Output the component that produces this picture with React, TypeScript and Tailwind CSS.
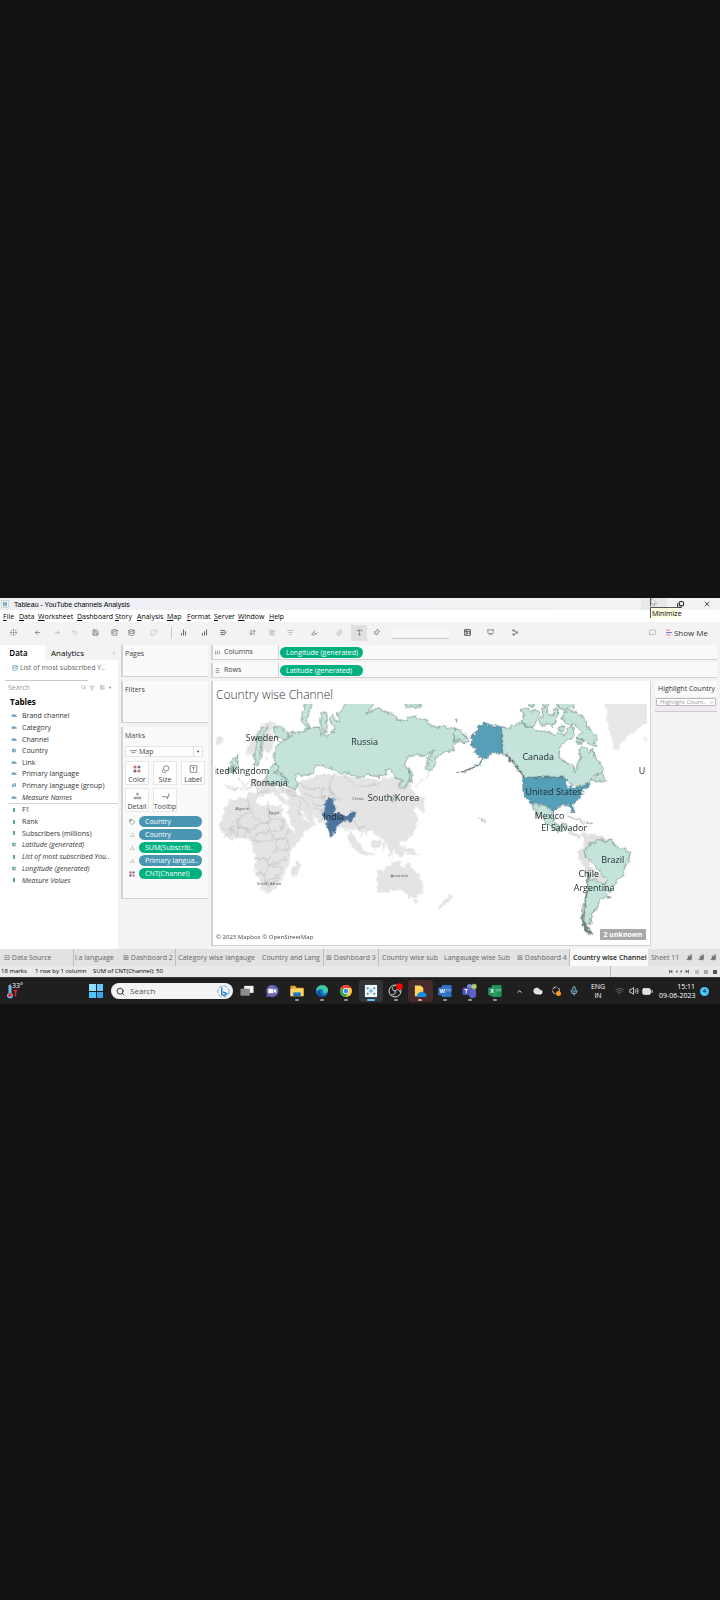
import React from 'react';
import {
  ChevronLeft, ArrowLeft, ArrowRight, Undo2, Save, DatabaseZap, RefreshCw, ArrowDownUp,
  ChartNoAxesColumn, ChartNoAxesColumnDecreasing, ListX, Highlighter, Paperclip, Tag, Pin,
  ChartBarBig, Presentation, Share2, Search, ListFilter, LayoutList, Wifi, Volume2, Mic,
  Cloud, ChevronUp, BatteryMedium, X, Copy, Database, MessageSquare, Type,
} from 'lucide-react';

const menus = [
  ['File', 'w-4'], ['Data', 'w-[19px]'], ['Worksheet', 'w-[39px]'], ['Dashboard', 'w-[38px]'], ['Story', 'w-[22px]'],
  ['Analysis', 'w-[30px]'], ['Map', 'w-5'], ['Format', 'w-[27px]'], ['Server', 'w-[24px]'], ['Window', 'w-[31px]'], ['Help', 'w-5'],
];

const dimensions = ['Brand channel', 'Category', 'Channel', 'Country', 'Link', 'Primary language', 'Primary language (group)', 'Measure Names'];
const measures = ['F1', 'Rank', 'Subscribers (millions)', 'Latitude (generated)', 'List of most subscribed You..', 'Longitude (generated)', 'Measure Values'];

function TitleBar() {
  return (
    <header className="flex h-3 items-center bg-gradient-to-r from-[#eef0f6] to-[#f3f3f3] text-black">
      <svg viewBox="0 0 16 16" className="ml-px h-2 w-2"><rect x="1" y="1" width="14" height="14" fill="#fff" stroke="#9bb" /><path d="M8 3v10M3 8h10M5 4v3M11 4v3M5 10v3M11 10v3" stroke="#2c7c97" strokeWidth="1.5" /></svg>
      <h1 className="ml-[5px] pt-px font-['Liberation_Sans'] text-[7px] leading-[11px]">Tableau - YouTube channels Analysis</h1>
      <button aria-label="Minimize" className="relative ml-auto h-3 w-[26px] bg-[#e8e8e8]">
        <span className="absolute top-[9px] left-[9px] z-10 h-[11px] w-[29px] border-t border-l border-[#555] bg-[#ffffe1] pl-px text-left text-[7px] leading-[11px]">Minimize</span>
        <svg viewBox="0 0 8 10" className="absolute top-0 left-[9px] h-[9px] w-2"><path d="M0 0v9" stroke="#333" /><path d="M1 0v7l2-1 1 3 1-1-1-2h3z" fill="#fff" stroke="#888" strokeWidth=".6" /></svg>
      </button>
      <button aria-label="Restore" className="flex h-3 w-[26px] items-center justify-center"><Copy className="h-[7px] w-[7px] -scale-x-100 rotate-180" strokeWidth={3} /></button>
      <button aria-label="Close" className="flex h-3 w-[27px] items-center justify-center"><X className="h-2 w-2" strokeWidth={2} /></button>
    </header>
  );
}

function Tool({ w, label, children }: { w: string; label: string; children: React.ReactNode }) {
  return <button aria-label={label} className={`flex h-4 shrink-0 items-center justify-center ${w}`}>{children}</button>;
}

const ic = 'h-[7px] w-[7px]';

function Toolbar() {
  return (
    <div className="flex h-[23px] items-center bg-[#f3f3f3] pb-[2px] text-[#555]">
      <Tool w="w-[26px]" label="Start page"><svg viewBox="0 0 12 12" className={ic}><path d="M6 0v3M6 9v3M0 6h3M9 6h3M6 4.500v3M4.500 6h3M2 2v2M10 2v2M2 8v2M10 8v2" stroke="#777" strokeWidth="1.5" /></svg></Tool>
      <Tool w="w-[22px]" label="Undo"><ArrowLeft className={ic} /></Tool>
      <Tool w="w-[18px]" label="Redo"><ArrowRight className={`${ic} text-[#aaa]`} /></Tool>
      <Tool w="w-4" label="Replay"><Undo2 className={`${ic} text-[#bbb]`} /></Tool>
      <Tool w="w-[26px]" label="Save"><Save className={ic} /></Tool>
      <Tool w="w-3" label="New data source"><DatabaseZap className={ic} /></Tool>
      <Tool w="w-[22px]" label="Pause updates"><Database className={ic} /></Tool>
      <Tool w="w-[22px]" label="Refresh"><RefreshCw className={`${ic} text-[#bbb]`} /></Tool>
      <span className="mr-px ml-[7px] h-3 w-px bg-[#c9c9c9]" />
      <Tool w="w-[20px]" label="New worksheet"><ChartNoAxesColumn className={ic} strokeWidth={3} /></Tool>
      <Tool w="w-[22px]" label="Duplicate"><ChartNoAxesColumnDecreasing className={`${ic} -scale-x-100`} strokeWidth={3} /></Tool>
      <Tool w="w-4" label="Clear sheet"><ListX className={ic} strokeWidth={3} /></Tool>
      <Tool w="w-[33px] pl-[10px]" label="Swap"><ArrowDownUp className={ic} /></Tool>
      <Tool w="w-4" label="Sort ascending"><ChartBarBig className={`${ic} text-[#aaa]`} /></Tool>
      <Tool w="w-5" label="Sort descending"><ListFilter className={`${ic} text-[#999]`} /></Tool>
      <Tool w="w-[28px]" label="Highlight"><Highlighter className={ic} /></Tool>
      <Tool w="w-[23px]" label="Group"><Paperclip className={`${ic} text-[#aaa]`} /></Tool>
      <button aria-label="Show labels" className="flex h-4 w-4 shrink-0 items-center justify-center bg-[#e0e0e0]"><Type className={ic} /></button>
      <Tool w="w-[18px]" label="Fix axes"><Pin className={`${ic} rotate-45`} /></Tool>
      <select aria-label="Fit" className="mr-2 ml-[7px] h-[13px] w-[57px] shrink-0 appearance-none border-b border-[#c6c6c6] bg-[#f6f6f6]" />
      <Tool w="w-5" label="Cards"><svg viewBox="0 0 12 12" className={ic}><path d="M1 1h10v10H1zM1 4h10M4 1v10M6 9V6M9 9V5" stroke="#555" fill="none" strokeWidth="1.500" /></svg></Tool>
      <Tool w="w-[26px]" label="Presentation"><Presentation className={ic} /></Tool>
      <Tool w="w-[24px]" label="Share"><Share2 className={`${ic} -scale-x-100`} /></Tool>
      <span className="flex-1" />
      <Tool w="w-[18px]" label="Guide"><MessageSquare className={`${ic} text-[#999]`} /></Tool>
      <button className="mr-3 ml-[4px] flex items-center gap-[2px] text-[8px] leading-4 text-[#333]">
        <svg viewBox="0 0 10 12" className="h-[7px] w-[6px]"><path d="M0 2h7M0 10h8" stroke="#d77" strokeWidth="1.500" /><path d="M0 6h10" stroke="#66c" strokeWidth="1.500" /></svg>
        Show Me
      </button>
    </div>
  );
}

function FieldIcon({ kind, color }: { kind: string; color: string }) {
  if (kind === 'abc') return <svg viewBox="0 0 12 6" className="h-[3px] w-[6px]"><path d="M1 4a1.500 1.500 0 1 0 0-1M5 0v5h2V2H5M11 2H9v3h2" fill="none" stroke={color} strokeWidth="1.500" /></svg>;
  if (kind === 'globe') return <svg viewBox="0 0 8 8" className="h-[5px] w-[6px]"><circle cx="4" cy="4" r="3.200" fill={color} /><path d="M4 1v6M4 4h3" stroke="#fff" /></svg>;
  if (kind === 'group') return <svg viewBox="0 0 8 8" className="h-[5px] w-[6px]"><path d="M2 7V2l4-1v5M1 5l5-1" stroke={color} fill="none" strokeWidth="1.300" /></svg>;
  return <svg viewBox="0 0 8 8" className="h-[4px] w-[6px]"><path d="M3 0v8M5 0v8" stroke={color} strokeWidth="1.800" /></svg>;
}

function DataPane() {
  const kinds = ['abc', 'abc', 'abc', 'globe', 'abc', 'abc', 'group', 'abc'];
  const mk = ['num', 'num', 'num', 'globe', 'num', 'globe', 'num'];
  return (
    <aside className="w-[118px] shrink-0 bg-white text-[#333]">
      <div className="flex h-[15px] text-[8px] leading-[14px] text-black">
        <button className="w-[45px] pr-2 text-center font-semibold">Data</button>
        <button className="flex flex-1 items-center justify-between bg-[#f3f3f3] pr-[1px] pl-[6px]">Analytics<ChevronLeft className="h-[6px] w-[6px] text-[#888]" /></button>
      </div>
      <button className="mt-[3px] ml-3 flex h-[10px] items-center gap-[2px] text-[7px] leading-[10px] whitespace-nowrap text-[#666]">
        <Database className="h-[6px] w-[6px] text-[#4787a0]" />List of most subscribed Y..
      </button>
      <div className="mt-[7px] ml-[5px] h-px w-[83px] bg-[#c8c8c8]" />
      <div className="flex h-[13px] items-center pr-[6px] pl-2 text-[#888]">
        <input aria-label="Search fields" placeholder="Search" className="h-3 min-w-0 flex-1 text-[7px] leading-3 outline-none placeholder:text-[#999]" />
        <Search className="h-[5px] w-[5px]" /><ListFilter className="ml-[3px] h-[6px] w-[6px]" /><LayoutList className="ml-[5px] h-[5px] w-[5px]" /><span className="ml-[3px] text-[4px]">▼</span>
      </div>
      <h2 className="mt-[2px] ml-[10px] h-3 text-[8px] leading-3 font-bold text-black">Tables</h2>
      <ul className="mt-[2px] grid h-[93px] auto-rows-fr text-[7px] leading-[11px]">
        {dimensions.map((d, i) => (
          <li key={d} className={`flex items-center gap-[5px] pl-[11px] whitespace-nowrap ${i === 7 ? 'italic' : ''}`}><FieldIcon kind={kinds[i]} color="#4787a0" />{d}</li>
        ))}
      </ul>
      <div className="ml-2 h-px bg-[#d4d4d4]" />
      <ul className="grid h-[82px] auto-rows-fr text-[7px] leading-[11px]">
        {measures.map((d, i) => (
          <li key={d} className={`flex items-center gap-[5px] pl-[11px] whitespace-nowrap ${i > 2 ? 'italic' : ''}`}><FieldIcon kind={mk[i]} color="#4a9a7c" />{d}</li>
        ))}
      </ul>
    </aside>
  );
}

const dots = <svg viewBox="0 0 12 12" className="h-2 w-2"><circle cx="3" cy="3" r="2.400" fill="#d96a72" /><circle cx="9" cy="3" r="2.400" fill="#5b7fb0" /><circle cx="3" cy="9" r="2.400" fill="#6c6a9c" /><circle cx="9" cy="9" r="2.400" fill="#e27b66" /></svg>;
const gs = 'h-2 w-[9px] fill-none stroke-[#555]';
const markButtons: [string, React.ReactNode][] = [
  ['Color', dots],
  ['Size', <svg viewBox="0 0 12 12" className={gs}><circle cx="7" cy="5" r="4" /><path d="M3 6a3 3 0 1 0 4 4" /></svg>],
  ['Label', <svg viewBox="0 0 12 12" className={gs}><path d="M1 1h10v10H1zM4 4h4M6 4v4" /></svg>],
  ['Detail', <svg viewBox="0 0 14 12" className={gs}><circle cx="3" cy="9" r="1.500" /><circle cx="7" cy="9" r="1.500" /><circle cx="11" cy="9" r="1.500" /><circle cx="7" cy="3" r="1.500" /></svg>],
  ['Tooltip', <svg viewBox="0 0 12 12" className={gs}><path d="M1 7h6l2 3V7h2V2" /></svg>],
];
const pills = [['Country', 'b'], ['Country', 'b'], ['SUM(Subscrib..', 'g'], ['Primary langua..', 'b'], ['CNT(Channel)', 'g']];
const card = 'border-b border-l-2 border-[#d2d2d2] bg-[#fafafa] pl-[2px] text-[7px] text-[#444]';

function Cards() {
  return (
    <div className="ml-[3px] flex w-[87px] shrink-0 flex-col gap-1">
      <section className={`${card} h-8 pt-1 leading-[10px]`}>Pages</section>
      <section className={`${card} h-[42px] pt-1 leading-[10px]`}>Filters</section>
      <section className={`${card} h-[172px] pt-1 leading-[10px]`}>
        <h2>Marks</h2>
        <button className="mt-[5px] flex h-[11px] w-[78px] items-center border border-[#e4e4e4] bg-white pl-1 text-[7px]">
          <svg viewBox="0 0 10 6" className="h-[4px] w-[7px]"><path d="M0 1h10M2 4h6" stroke="#888" strokeWidth="1.500" /></svg><span className="ml-[2px] flex-1 text-left">Map</span><span className="w-[9px] border-l border-[#ddd] text-[4px]">▼</span>
        </button>
        <div className="mt-[4px] grid w-[80px] grid-cols-3 gap-x-1 gap-y-[3px]">
          {markButtons.map(([n, g]) => (
            <button key={n} className="flex h-6 flex-col items-center justify-between border border-[#e6e6e6] bg-white pt-[3px] text-[7px] leading-[9px]">{g}<span>{n}</span></button>
          ))}
        </div>
        <ul className="mt-1 grid gap-[2px]">
          {pills.map(([t, c], i) => (
            <li key={i} className="flex h-[11px] items-center">
              <span className="flex w-[14px] justify-center">
                {i === 4 ? <span className="-m-px scale-75">{dots}</span> : i === 0 ? <Tag className="h-[6px] w-[6px]" /> : <svg viewBox="0 0 12 10" className="h-[4px] w-[5px] fill-none stroke-[#777]"><circle cx="2" cy="8" r="1.500" /><circle cx="9" cy="8" r="1.500" /><circle cx="6" cy="2" r="1.500" /></svg>}
              </span>
              <button className={`h-[11px] w-[63px] rounded-full pl-[6px] text-left text-[7px] leading-[11px] text-white ${c === 'b' ? 'bg-[#4996b2]' : 'bg-[#00b180]'}`}>{t}</button>
            </li>
          ))}
        </ul>
      </section>
    </div>
  );
}

function Shelf({ name, pill, rows }: { name: string; pill: string; rows?: boolean }) {
  return (
    <div className="flex h-[15px] items-center border-b border-l-2 border-[#d2d2d2] bg-[#fafafa]">
      <span className="flex h-full w-[66px] items-center gap-[4px] border-r border-[#d2d2d2] pl-[2px] text-[7px] leading-[14px] text-[#444]">
        <svg viewBox="0 0 8 8" className={`h-[5px] w-[5px] ${rows ? 'rotate-90' : ''}`}><path d="M1 1v6M4 1v6M7 1v6" stroke="#666" /></svg>{name}
      </span>
      <button className="ml-px h-[11px] w-[83px] rounded-full bg-[#00b180] pl-[6px] text-left text-[7px] leading-[11px] whitespace-nowrap text-white">{pill}</button>
    </div>
  );
}

const mint = { fill: '#c4e3da', stroke: '#56736e', strokeWidth: 2 };
const mapLabels: [string, number, number][] = [
  ['Sweden', 172, 304], ['Russia', 480, 315], ['ited Kingdom', 110, 402], ['Romania', 193, 439], ['South Korea', 567, 485],
  ['India', 387, 541], ['Canada', 1002, 359], ['United States', 1048, 467], ['Mexico', 1036, 539], ['El Salvador', 1080, 575],
  ['Brazil', 1226, 669], ['Chile', 1154, 713], ['Argentina', 1170, 754], ['U', 1314, 402],
];

function WorldMap() {
  return (
    <svg viewBox="30 192 1299 714" className="block w-full" role="img" aria-label="Country wise channel map">
      <defs>
        <filter id="coast" x="-5%" y="-5%" width="110%" height="110%">
          <feTurbulence type="fractalNoise" baseFrequency="0.07" numOctaves="2" seed="4" result="n" />
          <feDisplacementMap in="SourceGraphic" in2="n" scale="17" xChannelSelector="R" yChannelSelector="G" />
        </filter>
      </defs>
      <g filter="url(#coast)">
        <g fill="#e4e4e4" stroke="#f6f6f6" strokeWidth="1">
          <path d="M30 296l14-8 10 10-8 14-16 4z" />
          <path d="M120 340l8-22 14-16 8-24 16-18 22-14 22 0 4 14-14 10 6 30 8 14-20 18-10 6 8 26 20-6 20 10 20 80 30-22 80-25 160 20 60-15 30 20 20 40 30 10-4 18 8 22-14 4-12-20-14 6 10 20 4 22-14 36-22 18-20 6 18 34-10 14-14-10-12-20-4 30 16 34-10-10-16-50-14-30-50-30-70 0-10-6-34 0-16-14-20-2-4-16-18-6 6-16 20-6-20-4-40 6-24-4-14-8-6-14 14 2-14-20-14-6 20 34-10 6-24-36-20 0-30 16-20 24-20-4 4-34 36-4-14-24 22-6 20-20 22-14-4-26z" />
          <path d="M278 505l30-15 36 10 20 16-20 6-20-4 2 20 10 14-40 28-20 6-16-30-14-40 6-20z" />
          <path d="M600 460l14-8 10 10-20 30-16 12-8-4 20-16z" />
        </g>
        <g transform="translate(0 450)" fill="#e4e4e4">
          <path d="M76 28l30-4 28 0 0 10 18 4 12 6 34 4 30 0 6 12 6 20 12 26 12 20 34 0-8 20-26 28-10 16 2 28-14 16-2 22-12 20-14 20-20 12-18 0-8-14-6-30-14-26 6-34-8-18-6-26-10-12-20-4-30 6-26-20-12-20 10-34 8-22z" />
          <path d="M282 212l4 16-10 30-10 4-6-12 6-22z" />
          <path d="M516 250l20-10 14-14 14-6 4-6 22 0-2 12 14 10 8-26 10 22 14 16 12 14 10 20-2 26-16 16-28 0-14-20-10-6-26 4-20 10-20-2z" />
          <path d="M626 330l14 0-8 14zM732 310l14 8-4 8-16 16-18 16-8-6 16-16 16-12zM590 172l34 6 22 20-16 2-22-8z" />
          <path d="M434 118l18 30 28 36 30 8-4 6-40-4-20-18-18-34zM498 158l28-10 6 10-14 20-16-4zM538 120l10 24-8 0zM532 158l12 4-4 22zM546 40l8 18-8 8z" />
          <path d="M500 0l40 0-2 60-24 22-16 6-6-20z" />
          <path d="M450 70l30 0 14 50-6 10-20-16-18-24z" />
        </g>
        <g fill="#fff">
          <path d="M212 430l20-4 22 12-6 8-34 2zM270 424l12 6-2 20 10 14-8 6-10-20zM180 330l8 20-14 20-14 0 8-20zM206 306l8 10-6 20-8-2z" />
          <path d="M232 512l8 4 24 50-6 4-24-44zM286 516l10 2 20 22-4 6-20-14zM412 440l0 2z" />
        </g>
        <g fill="none" stroke="#b0aeac" strokeWidth="1.800">
          <path d="M128 478l8 36-34 20-20 20M136 514l30 34 26 0 0-66M192 537l42 0M102 534l-4 28 40 10 28-24M192 548l0 28-32 6-20 14M234 537l-4 36-32 6M80 560l40 2 20 20M100 570l0 26M56 566l30 4 10 26M70 578l-14 14M78 560l0 30M122 572l-4 24M198 579l16 20 30-4 6-28M140 600l30 6 40-6M214 599l0 30-30 30-34-4M244 595l6 34-36 4M184 659l10 20 30-14 20-10M150 702l30-2 22-30M180 700l0 30 20-10 30-20M202 680l30 4M172 730l20 10 30-26" />
          <path d="M78 450l60-6 10-20 20 10 40-4 30 20 36 10M60 440l40 6M100 410l20 30 20-20 30 8 20-16M240 460l46 10 26 26M150 442l10 20 20-8M180 450l20 16M278 430l34 20 40-6 34 14M300 460l30 16 50-12M320 490l30 10 30-20M352 444l4 40M390 400l-20 40 20 30 20 8M410 404l50 36 60-6 20-24M286 480l-6 40 40 20M330 500l30 20M450 545l10 20 20-6M460 560l14 30M470 572l20 18" />
        </g>
        <g {...mint}>
          <path d="M205 350L212 325 222 312 240 298 258 290 262 278 285 278 300 270 325 262 345 262 352 285 358 280 345 245 350 218 362 216 368 262 360 282 366 290 380 272 385 280 388 262 372 235 385 222 392 240 405 248 398 220 410 210 420 196 425 180 518 180 486 222 515 205 545 215 568 222 575 240 600 240 625 228 650 235 668 240 675 256 700 262 730 260 760 275 790 290 784 308 770 294 745 320 750 328 715 340 696 352 690 380 675 398 665 385 672 350 690 330 665 346 640 345 612 350 598 378 612 385 620 410 608 432 595 448 582 444 590 420 570 412 560 392 548 388 540 408 520 410 490 405 460 412 435 402 405 400 390 390 370 385 350 375 330 385 325 402 300 405 275 405 278 425 272 450 250 440 248 420 225 400 215 375z" />
          <path d="M304 180l20 0-8 30-10 28 10 24-4 2-22-18 2-32zM206 262l18-4 14 12 14 10 2 12-10 8-20-8-12 2-4-16zM160 280l10-16 18-4-10 20-6 30-4 40-8 26-12-4 2-40z" />
          <path d="M190 392l10-12 8-8 14 8 0 12-14 6 34 14-2 20-14 6-24-6-14 0-6-12zM612 384l10 24 0 26-6-6zM600 180l20 14 20-4 10 6-22 8-26-6zM752 240l8 0-4 8z" />
          <path d="M88 352l12-8-4 18 6 14-2 14-16 10-6-4 6-14-8-10zM72 386l8-4 0 10-8 4zM560 468l10-4 2 16-8 8z" />
        </g>
        <path d="M372 474l18 4-6 10 10 16-6 10 22 10 16 6 16-14 12 4-8 16-10 14-8-12-8 8-12 0-12 16-12 26-6 2-10-28-4-24-10-2-2-14 12-14-4-18z" fill="#4c749d" stroke="#56738d" strokeWidth="1.500" />
        <g transform="translate(750 0)">
          <path d="M446 180l140 0 0 62-20 14-26 20-20 14-20 20-8 26-10-10-12-26-6-30-6-38 2-20zM568 294l14-6 0 28z" fill="#e8e8e8" />
          <g {...mint}>
            <path d="M144 260L164 264 182 256 196 250 212 256 234 262 250 274 276 274 300 284 316 278 330 286 340 268 352 256 360 276 352 296 334 304 318 320 312 340 322 362 344 370 356 378 362 398 370 392 368 372 380 352 374 330 390 318 404 334 416 328 424 352 438 372 450 388 442 400 418 408 408 420 394 434 374 442 360 450 350 432 334 416 324 412 206 412 192 392 176 372 162 350 144 340Z" />
            <path d="M200 208L216 202 228 212 250 212 258 224 246 240 238 262 214 258 198 246 208 232ZM262 206L276 204 282 222 296 226 300 206 312 206 308 236 296 258 280 250 264 256 252 240 268 226ZM222 180L246 180 240 200 224 198ZM262 180L290 180 284 200 268 198ZM304 180L360 180 358 200 330 210 310 200Z" />
            <path d="M326 216L346 210 366 216 382 230 396 244 402 262 416 278 430 294 420 304 428 322 410 318 398 302 386 306 372 290 384 276 366 258 344 252 326 240ZM368 294L384 298 380 312 366 310ZM314 262L328 258 330 272 318 274Z" />
            <path d="M0 262L18 270 34 290 46 302 28 308 14 298 0 302ZM412 420L430 408 442 402 448 412 460 420 448 426 428 424Z" />
          </g>
          <g fill="#559fb8" stroke="#596d76" strokeWidth="2">
            <path d="M144 260l0 82-14-4-16 0-14 12-20 20-32 18-24 10 26-14 24-14 14-16-18-8-10-12 12-10-22-6-2-10 12-4-12-14 18-6 4-22 24-14 10 8z" />
            <path d="M206 412L330 412 344 430 350 444 366 446 384 440 406 428 412 434 396 446 384 460 376 474 366 486 356 496 362 520 354 518 346 500 326 496 306 502 298 516 280 500 264 492 236 490 214 476 206 448Z" />
          </g>
          <path d="M332 420l14 6 0 20-6-2-2-14zM352 434l10 6-4 8-6-4z" fill="#fff" />
          <path d="M158 346l12 16 14 12 12 20 12 16" fill="none" stroke="#566" strokeWidth="6" strokeDasharray="7 3" />
          <g {...mint}>
            <path d="M230 494l28 2 20 4 18 20 2 26 16 16 12-10 16 0-6 10-12 0-2 14-26-10-22-16-16-24z" />
          </g>
          <path d="M238 508l14 26M340 532l44 10 10 10M400 550l18 0M76 536l18 8" stroke="#999" fill="none" strokeWidth="3" />
          <path d="M330 560l14 20 30 18 12-18 50 8 14 10 20 0-6 20-54 12-6 50 40 30 12 40-10 14-20-30-24-12-10-44-16-20 0-24 16-20-2-20-40-22z" fill="#e2e2e2" stroke="#cbc8c8" strokeWidth="1.500" />
          <g {...mint}>
            <path d="M390 638L402 614 424 610 432 600 460 602 470 598 480 616 508 626 528 640 524 664 512 680 508 708 486 724 466 758 452 742 456 722 436 694 414 670 396 654Z" />
            <path d="M402 696L408 724 424 722 456 740 454 760 466 772 440 780 424 806 412 834 404 858 390 846 388 810 396 760Z" />
          </g>
          <path d="M402 690l0 40-8 70-4 30" fill="none" stroke="#667" strokeWidth="2.500" />
          <path d="M382 790l6 50 12 20 18 28-8 0-20-16-8-20z" fill="#6b817c" />
        </g>
        <path d="M635 440l30-28 14-20M690 330l-20 50" fill="none" stroke="#777" strokeWidth="1.500" strokeDasharray="5 5" />
      </g>
      <path d="M756 398l24-4 28-12" fill="none" stroke="#666" strokeWidth="2.500" strokeDasharray="8 4" />
      <g className="fill-[#555] text-[13px]" textAnchor="middle"><text x="112" y="510">Algeria</text><text x="208" y="522">Egypt</text><text x="460" y="480">China</text><text x="584" y="711">Australia</text><text x="193" y="736">South Africa</text></g>
      <g className="text-[27px]" textAnchor="middle" fill="#1f2a2c">{mapLabels.map(([t, x, y]) => <text key={t} x={x} y={y}>{t}</text>)}</g>
    </svg>
  );
}

function View() {
  return (
    <main className="flex h-[265px] min-w-0 flex-1 flex-col border-r border-b border-l-2 border-[#d2d2d2] bg-white">
      <h2 className="h-[23px] pt-[5px] pl-[3px] text-[12px] leading-[18px] font-light text-[#333]">Country wise Channel</h2>
      <div className="relative mr-[3px] ml-[2px] flex-1">
        <WorldMap />
        <p className="absolute bottom-[3px] left-px text-[6px] leading-[9px] text-[#444]">© 2023 Mapbox © OpenStreetMap</p>
        <button className="absolute right-px bottom-[5px] h-[11px] w-[46px] bg-[#a9a9a9] text-center text-[7px] leading-[11px] font-bold text-white">2 unknown</button>
      </div>
    </main>
  );
}

const tabs = [
  ['⊟ Data Source', 'w-[74px] border-r pl-1'], ["l a language", 'w-[45px] pl-[1px]'], ['⊞ Dashboard 2', 'w-[57px] border-r pl-1'],
  ['Category wise langauge', 'w-[81px] pl-[2px]'], ['Country and Lang', 'w-[67px] border-r pl-[5px]'], ['⊞ Dashboard 3', 'w-[55px] border-r pl-[2px]'],
  ['Country wise sub', 'w-[61px] pl-[3px]'], ['Langauage wise Sub', 'w-[74px] pl-1'], ['⊞ Dashboard 4', 'w-[56px] border-r pl-[3px]'],
  ['Country wise Channel', 'w-[78px] bg-[#fafafa] pl-[3px] font-semibold text-[#222]'], ['Sheet 11', 'w-[34px] pl-[3px]'],
];

function SheetTabs() {
  return (
    <nav className="flex h-[17px] overflow-hidden bg-[#e2e2e2]">
      {tabs.map(([t, c]) => <button key={t} className={`shrink-0 overflow-hidden border-[#bdbdbd] text-left text-[7px] leading-[17px] whitespace-nowrap ${t === 'Country wise Channel' ? '' : 'text-[#666]'} ${c}`}>{t}</button>)}
      <div className="ml-auto flex items-center gap-[5px] pr-[3px]">
        {['New worksheet', 'New dashboard', 'New story'].map((l) => <button key={l} aria-label={l}><svg viewBox="0 0 12 12" className={ic}><path d="M1 9h8V1M4 6h5M4 3v6M7 11V1" stroke="#555" fill="none" strokeWidth="1.500" /></svg></button>)}
      </div>
    </nav>
  );
}

function StatusBar() {
  return (
    <footer className="flex h-[11px] items-center bg-[#e9e9e9] text-[6px] leading-[11px] text-black">
      <span className="w-[35px] pl-px">18 marks</span><span className="w-[58px]">1 row by 1 column</span><span>SUM of CNT(Channel): 50</span>
      <div className="ml-auto flex h-full w-[110px] items-center justify-end gap-[5px] border-l border-[#bbb] pr-[3px]">
        <svg viewBox="0 0 24 6" className="h-[5px] w-[22px] fill-[#555]"><path d="M0 1h1v4H0zM4 1v4L1 3zM10 1v4L8 3zM14 1v4l2-2zM20 1v4l3-2zM23 1h1v4h-1z" /></svg>
        <span className="h-1 w-1 bg-[#bbb]" /><span className="h-1 w-1 bg-[#aaa]" /><span className="h-1 w-1 bg-[#555]" />
      </div>
    </footer>
  );
}

const L = ({ c, t }: { c: string; t: string }) => <svg viewBox="0 0 30 30" className="h-[14px] w-[14px]"><rect x="8" y="2" width="21" height="26" rx="2" fill={c} /><path d="M8 10h21v6H8z" fill="#fff" opacity=".25" /><rect x="1" y="8" width="16" height="16" rx="2" fill={c} stroke="#fff" strokeOpacity=".3" /><text x="9" y="20" textAnchor="middle" className="text-[12px] font-bold" fill="#fff">{t}</text></svg>;
const apps: [string, string, React.ReactNode][] = [
  ['Task view', '', <svg viewBox="0 0 30 30" className="h-[14px] w-[14px]"><rect x="9" y="4" width="20" height="15" fill="#f4f4f4" /><rect x="1" y="10" width="20" height="15" fill="#8d8d8d" /></svg>],
  ['Chat', '', <svg viewBox="0 0 30 30" className="h-[14px] w-[14px]"><path d="M15 2a13 13 0 1 1-6 24l-6 2 1-7A13 13 0 0 1 15 2z" fill="#6867b8" /><rect x="7" y="10" width="11" height="10" rx="2" fill="#fff" /><path d="M19 13l5-3v10l-5-3z" fill="#fff" /></svg>],
  ['File Explorer', 'bg-[#999]', <svg viewBox="0 0 30 30" className="h-[14px] w-[14px]"><path d="M1 4h10l3 4h15v18H1z" fill="#e8a92c" /><path d="M1 10h28v16H1z" fill="#ffd768" /><path d="M7 18h16v8H7z" fill="#1976c5" /></svg>],
  ['Edge', 'bg-[#999]', <svg viewBox="0 0 30 30" className="h-[14px] w-[14px]"><circle cx="15" cy="15" r="13" fill="#1979c8" /><path d="M2 14C4 0 27-2 28 13c0 7-9 8-11 5 3-4-2-9-8-7-4 1-6 3-7 3z" fill="#41c9a1" /><path d="M12 14c-3 8 4 13 12 10-8 8-20 2-18-6 1-3 3-4 6-4z" fill="#0c4c94" /></svg>],
  ['Chrome', 'bg-[#999]', <svg viewBox="0 0 30 30" className="h-[14px] w-[14px]"><circle cx="15" cy="15" r="13" fill="#fcc934" /><path d="M15 15L3.700 8.500A13 13 0 0 1 26.300 8.500H15z" fill="#ea4335" /><path d="M3.700 8.500A13 13 0 0 0 14 28l6-10-5-3z" fill="#34a853" /><circle cx="15" cy="15" r="6.500" fill="#fff" /><circle cx="15" cy="15" r="5" fill="#4285f4" /></svg>],
  ['Tableau', 'active', <svg viewBox="0 0 30 30" className="h-[14px] w-[14px]"><rect x="2" y="2" width="26" height="26" fill="#f4fbfd" /><path d="M15 10v10M10 15h10M8 6v6M5 9h6M22 6v6M19 9h6M8 18v6M5 21h6M22 18v6M19 21h6" stroke="#4692aa" strokeWidth="1.800" /></svg>],
  ['OBS', 'bg-[#999]', <svg viewBox="0 0 30 30" className="h-[15px] w-[15px]"><circle cx="14" cy="16" r="12" fill="#222" stroke="#ddd" strokeWidth="2" /><path d="M14 16c-6-1-7-6-3-9M14 16c4-4 9-3 10 2M14 16c2 5-2 9-7 7" stroke="#ddd" strokeWidth="2" fill="none" /><circle cx="23" cy="7" r="6.500" fill="#f00" /></svg>],
  ['Files', 'red', <svg viewBox="0 0 30 30" className="h-[14px] w-[14px]"><path d="M4 3h12l6 5v18H4z" fill="#ffd45e" /><path d="M10 28a5 5 0 0 1 2-8 7 7 0 0 1 11-1 5 5 0 0 1 4 9z" fill="#168be0" /></svg>],
  ['Word', 'bg-[#999]', <L c="#2b6fca" t="W" />],
  ['Teams', 'bg-[#999]', <svg viewBox="0 0 30 30" className="h-[15px] w-[15px]"><circle cx="15" cy="7" r="5" fill="#7b83eb" /><path d="M10 12h18v9a7 7 0 0 1-14 4z" fill="#5b62c4" /><rect x="1" y="9" width="15" height="15" rx="2" fill="#4b53bc" /><path d="M5 13h7M8.500 13v8" stroke="#fff" strokeWidth="2" /><circle cx="24" cy="7" r="5.500" fill="#92c353" /><path d="M21 7l2 2 4-4" stroke="#fff" fill="none" strokeWidth="1.500" /></svg>],
  ['Excel', 'bg-[#999]', <L c="#1c9355" t="X" />],
];

function Taskbar() {
  return (
    <footer className="flex h-[27px] items-center border-t border-[#3a3a3a] bg-[#1f1f1f] text-white">
      <button aria-label="Weather" className="relative ml-[6px] h-4 w-4"><svg viewBox="0 0 24 30" className="h-4 w-3"><path d="M5 5a3 3 0 0 1 6 0v14a6 6 0 1 1-6 0z" fill="#78b8ee" /><circle cx="8" cy="23" r="4" fill="#d33" /><path d="M15 14h8M19 14v12" stroke="#e22" strokeWidth="3" /></svg><span className="absolute -top-[1px] left-[6px] text-[7px] leading-[7px]">33°</span></button>
      <button aria-label="Start" className="ml-[67px] grid h-[14px] w-[14px] shrink-0 grid-cols-2 gap-px"><i className="bg-[#8fdcff]" /><i className="bg-[#62caff]" /><i className="bg-[#52c0fb]" /><i className="bg-[#2faaf2]" /></button>
      <label className="ml-2 flex h-4 w-[122px] shrink-0 items-center rounded-full bg-[#f3f3f3] px-1 text-[#333]">
        <Search className="ml-px h-[9px] w-[9px]" strokeWidth={2.5} />
        <input aria-label="Search" placeholder="Search" className="ml-[5px] min-w-0 flex-1 text-[8px] leading-3 outline-none placeholder:text-[#555]" />
        <svg viewBox="0 0 30 30" className="-mr-[1px] h-[13px] w-[13px]"><circle cx="15" cy="15" r="13" fill="none" stroke="#4aa3d8" strokeWidth="2" strokeDasharray="9 3" /><path d="M11 6v16l6 2 5-4-8-4" fill="none" stroke="#1878c8" strokeWidth="3" /></svg>
      </label>
      <div className="ml-[2px] grid h-full w-[272px] shrink-0 grid-cols-11">
        {apps.map(([n, d, g]) => (
          <button key={n} aria-label={n} className={`flex flex-col items-center ${d === 'active' ? 'my-[2px] rounded bg-[#323638] pt-[3px]' : d === 'red' ? 'my-[2px] rounded bg-[#472a2b] pt-[3px]' : 'pt-[5px]'}`}>
            <span className="flex h-[15px] items-center">{g}</span>
            {d && <i className={`mt-[1px] h-[2px] rounded-full ${d === 'active' ? 'w-2 bg-[#5cc1f5]' : d === 'red' ? 'w-1 bg-[#f59a9a]' : 'w-1 bg-[#999]'}`} />}
          </button>
        ))}
      </div>
      <button aria-label="Hidden icons" className="ml-auto"><ChevronUp className="h-[7px] w-[7px]" strokeWidth={3} /></button>
      <Cloud className="ml-[10px] h-[10px] w-[10px] fill-[#ddd]" />
      <svg viewBox="0 0 20 20" className="ml-[8px] h-[10px] w-[10px]"><circle cx="10" cy="9" r="7" fill="none" stroke="#ccc" strokeWidth="2" strokeDasharray="9 3" /><circle cx="15" cy="15" r="5" fill="#f79b22" /></svg>
      <Mic className="ml-[8px] h-[10px] w-[10px] text-[#8fd0ee]" />
      <button className="ml-[11px] w-4 text-center text-[7px] leading-[9px]">ENG<br />IN</button>
      <Wifi className="ml-[9px] h-[10px] w-[9px] text-[#777]" /><Volume2 className="ml-[5px] h-[10px] w-[10px]" /><BatteryMedium className="ml-[3px] h-[11px] w-[11px] fill-[#ddd]" />
      <button className="ml-[6px] w-[36px] text-right text-[7px] leading-[9px] whitespace-nowrap">15:11<br />09-06-2023</button>
      <span className="mr-[11px] ml-[5px] flex h-[9px] w-[9px] shrink-0 items-center justify-center rounded-full bg-[#4cc2ff] text-[6px] leading-none text-black">4</span>
    </footer>
  );
}

export default function App() {
  return (
    <div className="flex min-h-screen flex-col justify-center bg-[#121212] pt-[2px] font-['Open_Sans','Noto_Sans',sans-serif]">
      <div className="w-full overflow-hidden bg-[#f3f3f3]">
        <TitleBar />
        <nav className="flex h-3 bg-white pt-px pl-[3px] text-[7px] leading-[11px] text-black">
          {menus.map(([m, w]) => <button key={m} className={`shrink-0 text-left ${w}`}><span className="underline">{m[0]}</span>{m.slice(1)}</button>)}
        </nav>
        <Toolbar />
        <div className="flex h-[304px]">
          <DataPane />
          <Cards />
          <div className="mr-[3px] ml-[3px] flex min-w-0 flex-1 flex-col gap-[3px]">
            <Shelf name="Columns" pill="Longitude (generated)" />
            <Shelf name="Rows" pill="Latitude (generated)" rows />
            <div className="flex">
              <View />
              <aside className="ml-1 h-[31px] w-[62px] shrink-0 border-b border-[#ccc] bg-[#f1eaf3]">
                <label htmlFor="highlight" className="block h-4 bg-[#fafafa] pl-[3px] text-[7px] leading-4 whitespace-nowrap text-[#333]">Highlight Country</label>
                <input id="highlight" placeholder="Highlight Count..  ⌕" className="mx-[1px] mt-px block h-2 w-[60px] rounded-[1px] border border-[#bbb] bg-white pl-[3px] text-[6px] leading-[6px] placeholder:text-[#999]" />
              </aside>
            </div>
          </div>
        </div>
        <SheetTabs />
        <StatusBar />
        <Taskbar />
      </div>
    </div>
  );
}
